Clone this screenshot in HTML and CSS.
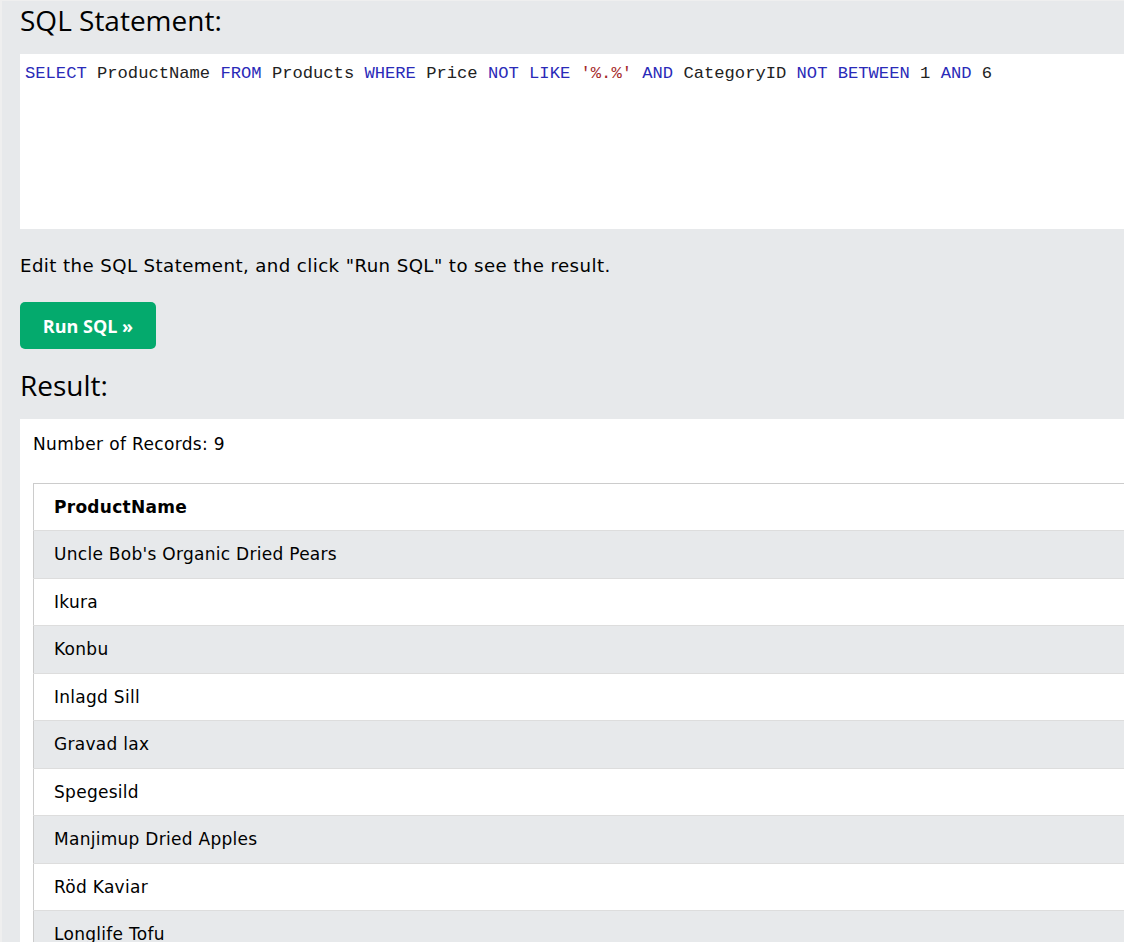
FILE: index.html
```html
<!DOCTYPE html>
<html lang="en">
<head>
<meta charset="utf-8">
<title>SQL Tryit</title>
<link rel="stylesheet" href="styles.css">
</head>
<body>
<div class="page">
  <h2 class="heading">SQL Statement:</h2>
  <div class="code-box">
    <div class="code-line"><span class="kw">SELECT</span> ProductName <span class="kw">FROM</span> Products <span class="kw">WHERE</span> Price <span class="kw">NOT</span> <span class="kw">LIKE</span> <span class="str">'%.%'</span> <span class="kw">AND</span> CategoryID <span class="kw">NOT</span> <span class="kw">BETWEEN</span> <span class="num">1</span> <span class="kw">AND</span> <span class="num">6</span></div>
  </div>
  <p class="hint">Edit the SQL Statement, and click "Run SQL" to see the result.</p>
  <button class="run-btn" type="button">Run SQL »</button>
  <h2 class="heading result-heading">Result:</h2>
  <div class="result-box">
    <div class="count">Number of Records: 9</div>
    <table class="result-table">
      <tr><th>ProductName</th></tr>
      <tr><td>Uncle Bob's Organic Dried Pears</td></tr>
      <tr><td>Ikura</td></tr>
      <tr><td>Konbu</td></tr>
      <tr><td>Inlagd Sill</td></tr>
      <tr><td>Gravad lax</td></tr>
      <tr><td>Spegesild</td></tr>
      <tr><td>Manjimup Dried Apples</td></tr>
      <tr><td>Röd Kaviar</td></tr>
      <tr><td>Longlife Tofu</td></tr>
    </table>
  </div>
</div>
</body>
</html>
```
FILE: styles.css
```css
html, body {
  margin: 0;
  padding: 0;
  background: #e7e9eb;
}

.page {
  background: #e7e9eb;
  border-left: 2px solid #efefef;
  border-top: 1px solid #efefef;
  padding-left: 18px;
  min-height: 941px;
  box-sizing: border-box;
  overflow: hidden;
}

.heading {
  margin: 0;
  font-family: "Open Sans", "Noto Sans", sans-serif;
  font-weight: 400;
  font-size: 28px;
  line-height: 38px;
  color: #000;
  padding-top: 0;
  height: 53px;
}

.code-box {
  background: #fff;
  height: 175px;
  padding: 9px 0 0 5px;
  box-sizing: border-box;
}

.code-line {
  font-family: "Liberation Mono", "DejaVu Sans Mono", monospace;
  font-size: 17.15px;
  line-height: 22px;
  color: #222;
  white-space: pre;
}

.kw { color: #2a2ab8; }
.str { color: #a52a2a; }
.num { color: #222; }

.hint {
  margin: 0;
  padding-top: 24px;
  height: 73px;
  box-sizing: border-box;
  font-family: "DejaVu Sans", Verdana, sans-serif;
  font-size: 18.2px;
  letter-spacing: 0.4px;
  line-height: 26px;
  color: #000;
}

.run-btn {
  display: block;
  width: 136px;
  height: 47px;
  border: none;
  border-radius: 5px;
  background: #04aa6d;
  color: #fff;
  font-family: "Open Sans", "Noto Sans", sans-serif;
  font-weight: 700;
  font-size: 18px;
  padding: 0;
  cursor: pointer;
}

.result-heading {
  height: 70px;
  line-height: 72px;
}

.result-box {
  background: #fff;
  padding: 12px 0 0 13px;
  min-height: 600px;
  box-sizing: border-box;
}

.count {
  font-family: "DejaVu Sans", Verdana, sans-serif;
  font-size: 17px;
  letter-spacing: 0.35px;
  line-height: 27px;
  color: #000;
  height: 52px;
}

.result-table {
  width: 100%;
  border-collapse: collapse;
  border: 1px solid #cccccc;
  border-right: none;
  font-family: "DejaVu Sans", Verdana, sans-serif;
  font-size: 17px;
  letter-spacing: 0.28px;
  color: #000;
}

.result-table th,
.result-table td {
  text-align: left;
  padding: 12px 20px;
  line-height: 22.5px;
  border-bottom: 1px solid #dddddd;
}

.result-table th {
  font-weight: 700;
  padding-top: 12px;
  padding-bottom: 11.5px;
}

.result-table tr:nth-child(even) {
  background: #e7e9eb;
}
```
